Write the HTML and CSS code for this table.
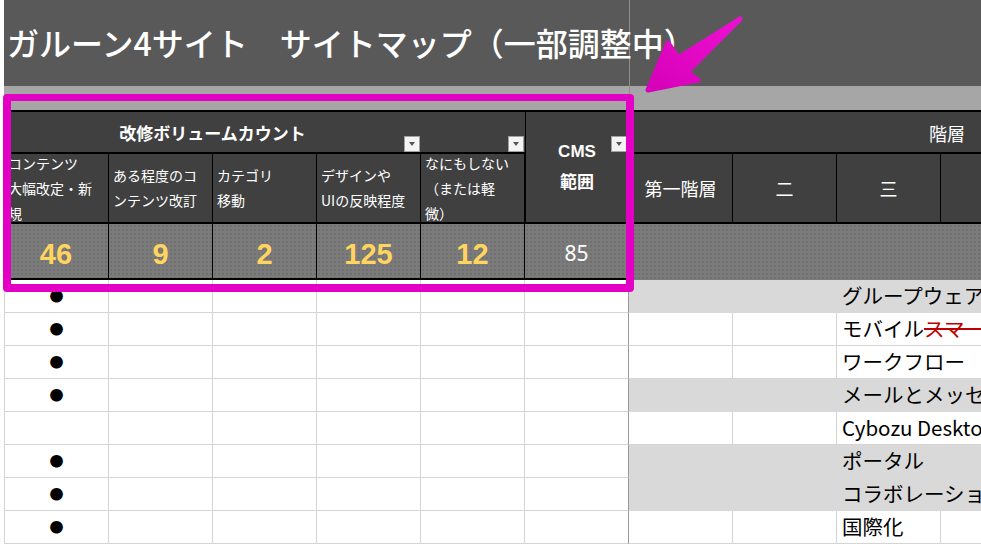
FILE: index.html
```html
<!DOCTYPE html>
<html lang="ja">
<head>
<meta charset="utf-8">
<title>ガルーン4サイト サイトマップ</title>
<link rel="stylesheet" href="styles.css">
</head>
<body>
<div class="sheet">
  <div class="title">ガルーン4サイト　サイトマップ（一部調整中）</div>
  <div class="band"></div>

  <div class="head">
    <div class="h1 span4">改修ボリュームカウント<span class="filter"></span></div>
    <div class="h1 c5"><span class="filter"></span></div>
    <div class="cms"><span>CMS</span><span>範囲</span><span class="filter top"></span></div>
    <div class="h1 right"><span>階層</span></div>

    <div class="h2">コンテンツ<br>大幅改定・新<br>規</div>
    <div class="h2">ある程度のコ<br>ンテンツ改訂</div>
    <div class="h2">カテゴリ<br>移動</div>
    <div class="h2">デザインや<br>UIの反映程度</div>
    <div class="h2">なにもしない<br>（または軽<br>微）</div>
    <div class="h2r">第一階層</div>
    <div class="h2r">二</div>
    <div class="h2r">三</div>
    <div class="h2r last"></div>

    <div class="num">46</div>
    <div class="num">9</div>
    <div class="num">2</div>
    <div class="num">125</div>
    <div class="num">12</div>
    <div class="num cmsnum">85</div>
    <div class="numr"></div>
  </div>

  <div class="rows">
    <div class="row g"><div class="c b">●</div><div class="c"></div><div class="c"></div><div class="c"></div><div class="c"></div><div class="c fz"></div><div class="r"></div><div class="r"></div><div class="t">グループウェア</div></div>
    <div class="row"><div class="c b">●</div><div class="c"></div><div class="c"></div><div class="c"></div><div class="c"></div><div class="c fz"></div><div class="r"></div><div class="r"></div><div class="t">モバイル<span class="del">スマートフォン</span></div></div>
    <div class="row"><div class="c b">●</div><div class="c"></div><div class="c"></div><div class="c"></div><div class="c"></div><div class="c fz"></div><div class="r"></div><div class="r"></div><div class="t">ワークフロー</div></div>
    <div class="row g"><div class="c b">●</div><div class="c"></div><div class="c"></div><div class="c"></div><div class="c"></div><div class="c fz"></div><div class="r"></div><div class="r"></div><div class="t">メールとメッセージ</div></div>
    <div class="row"><div class="c b"></div><div class="c"></div><div class="c"></div><div class="c"></div><div class="c"></div><div class="c fz"></div><div class="r"></div><div class="r"></div><div class="t">Cybozu Desktop</div></div>
    <div class="row g"><div class="c b">●</div><div class="c"></div><div class="c"></div><div class="c"></div><div class="c"></div><div class="c fz"></div><div class="r"></div><div class="r"></div><div class="t">ポータル</div></div>
    <div class="row g"><div class="c b">●</div><div class="c"></div><div class="c"></div><div class="c"></div><div class="c"></div><div class="c fz"></div><div class="r"></div><div class="r"></div><div class="t">コラボレーション</div></div>
    <div class="row"><div class="c b">●</div><div class="c"></div><div class="c"></div><div class="c"></div><div class="c"></div><div class="c fz"></div><div class="r"></div><div class="r"></div><div class="t short">国際化</div><div class="r end"></div></div>
  </div>
</div>

<div class="frame"></div>
<svg class="arrow" width="110" height="84" viewBox="0 0 110 84">
  <defs>
    <linearGradient id="ag" x1="1" y1="0" x2="0" y2="1">
      <stop offset="0" stop-color="#ee10d2"/>
      <stop offset="1" stop-color="#d600b8"/>
    </linearGradient>
  </defs>
  <polygon points="8,78 28,31 38,46 100,7 47,60 58,68" fill="url(#ag)" stroke="url(#ag)" stroke-width="5" stroke-linejoin="round"/>
</svg>
</body>
</html>
```

FILE: styles.css
```css
* { box-sizing: border-box; }
html, body { margin: 0; padding: 0; }
body {
  width: 981px;
  height: 546px;
  overflow: hidden;
  background: #fff;
  font-family: "Noto Sans CJK JP", "Noto Sans", sans-serif;
  position: relative;
}
.sheet {
  padding-left: 4px;
}
.title {
  height: 86px;
  line-height: 84px;
  padding-left: 3px;
  color: #fff;
  font-size: 32px;
  font-weight: 500;
  white-space: nowrap;
  background: linear-gradient(to right, transparent 625px, #8e8e8e 625px, #8e8e8e 626px, transparent 626px), #595959;
}
.band {
  height: 24px;
  background: linear-gradient(to right, transparent 625px, #8e8e8e 625px, #8e8e8e 626px, transparent 626px), #a6a6a6;
}

.head {
  display: grid;
  grid-template-columns: 105px 104px 104px 104px 104px 104px 104px 104px 104px 40px;
  grid-template-rows: 42px 70px 56px;
  border-top: 2px solid #000;
  color: #fff;
}
.h1 {
  background: #404040;
  border-bottom: 2px solid #000;
  position: relative;
}
.span4 {
  grid-column: 1 / 5;
  display: flex;
  align-items: center;
  justify-content: center;
  font-size: 17px;
  font-weight: 700;
}
.c5 { grid-column: 5; }
.cms {
  grid-column: 6;
  grid-row: 1 / 3;
  background: #404040;
  border-left: 1px solid #000;
  border-right: 1px solid #000;
  border-bottom: 2px solid #000;
  display: flex;
  flex-direction: column;
  align-items: center;
  justify-content: center;
  font-size: 17px;
  font-weight: 700;
  line-height: 29px;
  position: relative;
  padding-bottom: 2px;
}
.cms span:first-child { font-family: "Liberation Sans", sans-serif; }
.right {
  grid-column: 7 / 11;
  display: flex;
  align-items: center;
  justify-content: flex-end;
  padding-right: 16px;
  font-size: 18px;
  padding-top: 1px;
}
.filter {
  position: absolute;
  right: 1px;
  bottom: 0;
  width: 16px;
  height: 16px;
  background: #f4f4f4;
  border: 1px solid #a0a0a0;
}
.filter::after {
  content: "";
  position: absolute;
  left: 4px;
  top: 5px;
  border-left: 3.5px solid transparent;
  border-right: 3.5px solid transparent;
  border-top: 4px solid #555;
}
.filter.top {
  bottom: auto;
  top: 24px;
}
.h2 {
  background: #404040;
  border-right: 1px solid #000;
  border-bottom: 2px solid #000;
  font-size: 14px;
  line-height: 25px;
  padding-left: 4px;
  display: flex;
  align-items: center;
  white-space: nowrap;
  overflow: hidden;
}
.h2:first-child { padding-left: 2px; }
.h2r {
  background: #404040;
  border-right: 1px solid #000;
  border-bottom: 2px solid #000;
  font-size: 18px;
  display: flex;
  align-items: center;
  justify-content: center;
}
.h2r.last { border-right: none; }
.num {
  background-color: #7b7b7b;
  background-image: radial-gradient(#6f6f6f 0.7px, transparent 0.8px);
  background-size: 4px 4px;
  border-right: 1px solid #000;
  border-bottom: 2px solid #000;
  color: #ffd55f;
  font-family: "Liberation Sans", sans-serif;
  font-weight: 700;
  font-size: 29px;
  display: flex;
  align-items: center;
  justify-content: center;
  padding-top: 7px;
}
.num.cmsnum {
  color: #fff;
  font-weight: 400;
  font-size: 21px;
  font-family: "Noto Sans", sans-serif;
  padding-top: 4px;
}
.numr {
  grid-column: 7 / 11;
  background-color: #7b7b7b;
  background-image: radial-gradient(#6f6f6f 0.7px, transparent 0.8px);
  background-size: 4px 4px;
}

.rows { display: flex; flex-direction: column; }
.row {
  display: grid;
  grid-template-columns: 105px 104px 104px 104px 104px 104px 104px 104px 104px 40px;
  height: 33px;
}
.c {
  border-right: 1px solid #d4d4d4;
  border-bottom: 1px solid #d4d4d4;
}
.c.b {
  border-left: 1px solid #d4d4d4;
  display: flex;
  align-items: center;
  justify-content: center;
  font-size: 14px;
  color: #000;
  padding-bottom: 2px;
}
.c.fz { border-right: 1px solid #999; }
.r {
  border-right: 1px solid #d4d4d4;
  border-bottom: 1px solid #d4d4d4;
}
.t {
  grid-column: 9 / 11;
  border-bottom: 1px solid #d4d4d4;
  padding-left: 5px;
  font-size: 20.5px;
  line-height: 31px;
  color: #000;
  white-space: nowrap;
  overflow: hidden;
}
.t.short {
  grid-column: 9;
  border-right: 1px solid #d4d4d4;
}
.r.end { border-right: none; }
.del {
  color: #c00000;
  text-decoration: line-through;
  text-decoration-color: #c00000;
}
.row.g .r, .row.g .t {
  background: #d9d9d9;
  border-color: #d9d9d9;
}

.frame {
  position: absolute;
  left: 3px;
  top: 94px;
  width: 631px;
  height: 198px;
  border: 8px solid #e300c4;
  border-top-width: 7px;
  border-radius: 4px;
}
.arrow {
  position: absolute;
  left: 640px;
  top: 12px;
}
```
